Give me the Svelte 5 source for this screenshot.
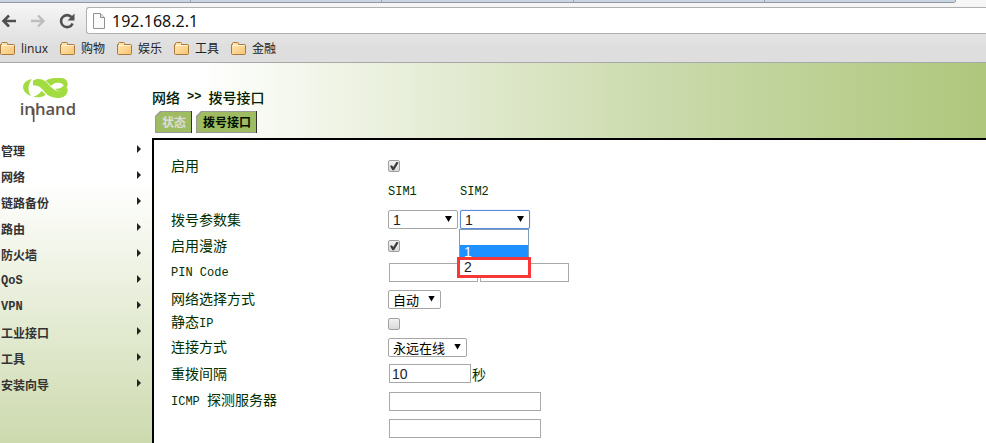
<script>
  const bookmarks = ['linux', '购物', '娱乐', '工具', '金融'];

  const menu = [
    { label: '管理' },
    { label: '网络' },
    { label: '链路备份' },
    { label: '路由' },
    { label: '防火墙' },
    { label: 'QoS', latin: true },
    { label: 'VPN', latin: true },
    { label: '工业接口' },
    { label: '工具' },
    { label: '安装向导' },
  ];

  let url = $state('192.168.2.1');
  let activeTab = $state('拨号接口');
  let enabled = $state(true);
  let roaming = $state(true);
  let staticIp = $state(false);
  let profile1 = $state('1');
  let profile2 = $state('1');
  let listOpen = $state(true);
  let pin1 = $state('');
  let pin2 = $state('');
  let networkMode = $state('自动');
  let connectMode = $state('永远在线');
  let redial = $state('10');
  let icmp1 = $state('');
  let icmp2 = $state('');

  function pickProfile(value) {
    profile2 = value;
    listOpen = false;
  }
</script>

<div class="page">
  <div class="browser">
    <div class="tab-strip"><i></i><i></i><i></i><i></i><i></i></div>
    <div class="toolbar">
      <button class="nav" aria-label="Back">
        <svg width="16" height="14" viewBox="0 0 16 14"><path d="M15 7H3M8 1.5L2.5 7L8 12.5" fill="none" stroke="#505050" stroke-width="2.6" /></svg>
      </button>
      <button class="nav" aria-label="Forward">
        <svg width="16" height="14" viewBox="0 0 16 14"><path d="M1 7H13M8 1.5L13.5 7L8 12.5" fill="none" stroke="#bdbdbd" stroke-width="2.4" /></svg>
      </button>
      <button class="nav" aria-label="Reload">
        <svg width="16" height="16" viewBox="0 0 16 16"><path d="M12.6 4.2A6 6 0 1 0 13.6 10.5" fill="none" stroke="#505050" stroke-width="2.6" /><path d="M15.5 0.5V7.5H8.5Z" fill="#505050" /></svg>
      </button>
      <div class="address">
        <svg width="12" height="16" viewBox="0 0 12 16"><path d="M0.5 0.5H7.5L11.5 4.5V15.5H0.5Z" fill="#fafafa" stroke="#919191" /><path d="M7.5 0.5V4.5H11.5" fill="#e4e4e4" stroke="#919191" /></svg>
        <input type="text" aria-label="Address" bind:value={url} />
      </div>
    </div>
    <nav class="bookmarks">
      {#each bookmarks as name}
        <a href="#{name}">
          <svg width="15" height="13" viewBox="0 0 15 13">
            <defs>
              <linearGradient id="folder" x1="0" y1="0" x2="1" y2="1">
                <stop offset="0" stop-color="#ffe9b5" />
                <stop offset="1" stop-color="#f8c472" />
              </linearGradient>
            </defs>
            <path d="M0.5 11.5V2.5H1.5V1.5Q1.5 0.5 2.5 0.5H6.5Q7.5 0.5 7.5 1.5V2.5H13.5Q14.5 2.5 14.5 3.5V11.5Q14.5 12.5 13.5 12.5H1.5Q0.5 12.5 0.5 11.5Z" fill="url(#folder)" stroke="#a9793f" />
            <path d="M2 3.5H13.5" stroke="#fff3d4" />
          </svg>
          {name}
        </a>
      {/each}
    </nav>
  </div>

  <header>
    <div class="brand">
      <svg width="62" height="46" viewBox="15 12 186 138" role="img" aria-label="inhand">
        <g fill="#a2dc40">
          <path d="M50 16C34 18 24 28 24 40C26 54 36 62 48 66C38 52 38 34 50 16Z" />
          <path d="M54 20C66 12 84 14 96 26C108 40 120 52 134 52C142 52 150 48 158 42C160 60 150 70 134 72C108 74 94 62 82 46C76 38 66 34 54 34Z" />
          <path d="M92 20C104 12 122 10 140 12C154 14 158 22 158 32L154 44C146 28 134 24 122 27C116 29 112 32 108 36Z" />
          <path d="M54 68C64 66 74 58 80 50L92 62C82 70 68 72 54 68Z" />
          <path d="M122 44C132 46 142 40 148 32L156 44C146 54 134 54 122 48Z" />
        </g>
        <text x="14" y="124" class="wordmark">inhand</text>
        <path d="M56 104V144" stroke="#5c5250" stroke-width="5" />
      </svg>
    </div>
    <div class="heading">
      <h1><span>网络</span><span class="latin">&gt;&gt;</span><span>拨号接口</span></h1>
      <div class="tabs">
        {#each ['状态', '拨号接口'] as tab}
          <button class:active={tab === activeTab} onclick={() => (activeTab = tab)}><span>{tab}</span></button>
        {/each}
      </div>
    </div>
  </header>

  <div class="body">
    <nav class="sidebar">
      {#each menu as item}
        <a href="#{item.label}" class:latin={item.latin}>{item.label}</a>
      {/each}
    </nav>

    <main>
      <div class="row tight">
        <label for="enable">启用</label>
        <input id="enable" type="checkbox" bind:checked={enabled} />
      </div>
      <div class="row">
        <span></span>
        <div class="fields sims latin"><span>SIM1</span><span>SIM2</span></div>
      </div>
      <div class="row tall">
        <label for="profile1">拨号参数集</label>
        <div class="fields">
          <span class="select profile">
            <select id="profile1" bind:value={profile1}><option>1</option><option>2</option></select>
          </span>
          <span class="select profile focused">
            <select aria-label="SIM2" bind:value={profile2}><option></option><option>1</option><option>2</option></select>
            {#if listOpen}
              <div class="options">
                {#each ['', '1', '2'] as value}
                  <button class:selected={value === profile2} class:marked={value === '2'} aria-label={value || 'none'} onclick={() => pickProfile(value)}>{value}</button>
                {/each}
              </div>
            {/if}
          </span>
        </div>
      </div>
      <div class="row tight">
        <label for="roaming">启用漫游</label>
        <input id="roaming" type="checkbox" bind:checked={roaming} />
      </div>
      <div class="row tall">
        <label for="pin1" class="latin">PIN Code</label>
        <div class="fields">
          <input id="pin1" type="text" class="pin" bind:value={pin1} />
          <input type="text" class="pin" aria-label="PIN Code SIM2" bind:value={pin2} />
        </div>
      </div>
      <div class="row tight">
        <label for="network">网络选择方式</label>
        <span class="select"><select id="network" bind:value={networkMode}><option>自动</option></select></span>
      </div>
      <div class="row tight">
        <label for="static-ip">静态<span class="latin">IP</span></label>
        <input id="static-ip" type="checkbox" bind:checked={staticIp} />
      </div>
      <div class="row tight">
        <label for="connect">连接方式</label>
        <span class="select"><select id="connect" bind:value={connectMode}><option>永远在线</option></select></span>
      </div>
      <div class="row tall">
        <label for="redial">重拨间隔</label>
        <div class="fields unit">
          <input id="redial" type="text" class="short" bind:value={redial} /><span>秒</span>
        </div>
      </div>
      <div class="row">
        <label for="icmp1"><span class="latin">{'ICMP '}</span>探测服务器</label>
        <input id="icmp1" type="text" class="server" bind:value={icmp1} />
      </div>
      <div class="row">
        <span></span>
        <input type="text" class="server" aria-label="ICMP 2" bind:value={icmp2} />
      </div>
    </main>
  </div>
</div>

<style>
  :global(body) {
    margin: 0;
    background: #fff;
  }

  .page {
    min-height: 100vh;
    display: flex;
    flex-direction: column;
    overflow: hidden;
    font-family: 'Noto Sans CJK SC', sans-serif;
    font-size: 14px;
    color: #003000;
  }

  .page :is(button, input, select) {
    box-sizing: border-box;
    margin: 0;
    font-family: inherit;
  }

  .page svg {
    flex: none;
    display: block;
  }

  .latin {
    font-family: 'Liberation Mono', monospace;
    font-size: 12px;
    white-space: pre;
  }

  .browser {
    background: linear-gradient(#f8f8f8, #dedede 75%);
    border-bottom: 1px solid #a8a8a8;
  }

  .tab-strip {
    display: flex;
    height: 2px;
    margin-right: 30px;
    background: #cbd5e1;
    border-bottom: 1px solid #8e99a6;
    border-bottom-right-radius: 3px;
  }

  .tab-strip i {
    flex: 1;
    border-right: 1px solid #9aa5b2;
  }

  .toolbar {
    display: flex;
    align-items: center;
    height: 35px;
    gap: 13px;
    padding-left: 1px;
    border-top: 1px solid #aaa;
    box-sizing: border-box;
  }

  .nav {
    border: none;
    background: none;
    padding: 0;
  }

  .address {
    flex: 1;
    display: flex;
    align-items: center;
    gap: 7px;
    box-sizing: border-box;
    height: 27px;
    padding-left: 6px;
    margin-left: -2px;
    background: #fff;
    border: 1px solid #b0b0b0;
    border-right: none;
    border-radius: 3px 0 0 3px;
  }

  .toolbar {
    border-top: none;
  }

  .address input {
    flex: 1;
    border: none;
    outline: none;
    padding: 0;
    background: none;
    font: 16px 'Noto Sans', sans-serif;
    color: #111;
  }

  .bookmarks {
    display: flex;
    gap: 12px;
    height: 24px;
  }

  .bookmarks a {
    display: flex;
    align-items: center;
    gap: 6px;
    height: 20px;
    font-family: 'Open Sans', 'Noto Sans CJK SC', sans-serif;
    font-size: 12px;
    color: #222;
    text-decoration: none;
  }

  header {
    display: grid;
    grid-template-columns: 152px 1fr;
    height: 75px;
    background: linear-gradient(90deg, #fff 20%, #c8d8a7 70%, #aec77c);
  }

  .brand {
    padding: 15px 0 0 20px;
  }

  .wordmark {
    font-family: 'Open Sans', sans-serif;
    font-size: 50px;
    font-weight: 600;
    fill: #5c5250;
  }

  .heading {
    display: flex;
    flex-direction: column;
    padding-top: 24px;
  }

  h1 {
    display: flex;
    align-items: center;
    gap: 7px;
    margin: 0;
    font-size: 14px;
    font-weight: 500;
    line-height: 20px;
    color: #002000;
  }

  h1 .latin {
    font-weight: 700;
  }

  .tabs {
    display: flex;
    gap: 4px;
    padding: 4px 0 0 3px;
  }

  .tabs button {
    height: 22px;
    padding: 1px;
    border: none;
    background: linear-gradient(90deg, #999 calc(100% - 1px), #333 0);
    clip-path: polygon(5px 0, 100% 0, 100% 100%, 0 100%, 0 5px);
    font-size: 12px;
    font-weight: 700;
    line-height: 20px;
    color: #dcdcdc;
  }

  .tabs button span {
    display: block;
    height: 20px;
    padding: 0 5px 0 6px;
    background: #9fbc62;
    clip-path: polygon(5px 0, 100% 0, 100% 100%, 0 100%, 0 5px);
  }

  .tabs button.active {
    color: #001000;
  }

  .body {
    flex: 1;
    display: grid;
    grid-template-columns: 152px 1fr;
  }

  .sidebar {
    display: flex;
    flex-direction: column;
    background: linear-gradient(#fff 14%, #cddaae);
  }

  .sidebar a {
    display: flex;
    justify-content: space-between;
    padding: 0 11px 0 1px;
    font-size: 12px;
    font-weight: 700;
    line-height: 26px;
    color: #333;
    text-decoration: none;
  }

  .sidebar a::after {
    content: '';
    width: 4px;
    height: 8px;
    margin-top: 7px;
    background: #222;
    clip-path: polygon(0 0, 100% 50%, 0 100%);
  }

  main {
    padding: 14px 0 0 17px;
    background: #fff;
    border-top: 2px solid #000;
    border-left: 2px solid #000;
  }

  .row {
    display: grid;
    grid-template-columns: 217px 1fr;
    align-items: center;
    justify-items: start;
    height: 27px;
  }

  .row.tight {
    height: 24px;
  }

  .row.tall {
    height: 29px;
  }

  .row label {
    line-height: 20px;
  }

  .row label:not(.latin) {
    padding-bottom: 2px;
  }

  .fields {
    display: flex;
    align-items: center;
    gap: 2px;
    line-height: 20px;
  }

  .unit {
    gap: 1px;
  }

  .sims span {
    width: 70px;
  }

  main input[type='text'] {
    height: 19px;
    margin-left: 1px;
    padding: 0 2px;
    border: 1px solid #a9a9a9;
    font: 14px 'Liberation Sans', sans-serif;
    color: #222;
  }

  main input + input[type='text'] {
    margin-left: 0;
  }

  .pin {
    width: 89px;
  }

  .short {
    width: 82px;
  }

  main .server {
    width: 152px;
  }

  input[type='checkbox'] {
    appearance: none;
    width: 12px;
    height: 12px;
    border: 1px solid #a0a0a0;
    border-radius: 2px;
    background: linear-gradient(#f2f2f2, #dadada);
  }

  input[type='checkbox']:checked::before {
    content: '';
    display: block;
    width: 10px;
    height: 10px;
    background: #3c3c3c;
    clip-path: polygon(10% 50%, 28% 42%, 42% 60%, 76% 8%, 96% 18%, 50% 92%, 34% 92%);
  }

  .select {
    position: relative;
    display: flex;
  }

  .select::after {
    content: '';
    position: absolute;
    top: 6px;
    right: 6px;
    width: 7px;
    height: 6px;
    background: #000;
    clip-path: polygon(0 0, 100% 0, 50% 100%);
    pointer-events: none;
  }

  select {
    appearance: none;
    height: 19px;
    padding: 0 20px 0 4px;
    border: 1px solid #a6a6a6;
    border-radius: 2px;
    background: #fff;
    font-size: 13px;
    line-height: 17px;
    color: #000;
  }

  .profile select {
    width: 70px;
    font: 14px 'Liberation Sans', sans-serif;
    color: #222;
  }

  .focused select {
    border-color: #5b8dd8;
    box-shadow: 0 0 1px #5b8dd8;
  }

  .options {
    position: absolute;
    z-index: 1;
    top: 19px;
    left: -1px;
    right: 1px;
    border: 1px solid #7f9db9;
    background: #fff;
  }

  .options button {
    display: block;
    width: 100%;
    height: 15px;
    padding: 0 4px;
    border: none;
    background: #fff;
    font: 14px/15px 'Liberation Sans', sans-serif;
    text-align: left;
    color: #222;
  }

  .options .selected {
    background: #1e90ff;
    color: #fff;
  }

  .options .marked {
    position: relative;
    outline: 3px solid #f93737;
  }
</style>
